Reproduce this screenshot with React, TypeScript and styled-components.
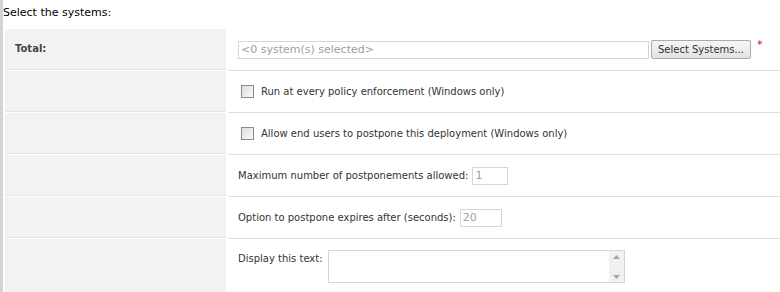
import React from "react";
import styled, { createGlobalStyle } from "styled-components";

const GlobalStyle = createGlobalStyle`
  html, body {
    margin: 0;
    padding: 0;
    background: #fff;
  }
  body {
    font-family: "DejaVu Sans", Verdana, sans-serif;
    font-size: 10px;
    color: #333;
  }
`;

const Page = styled.div`
  border-left: 3px solid #d4d4d4;
  min-height: 292px;
  box-sizing: border-box;
`;

const Title = styled.div`
  font-size: 11px;
  line-height: 16px;
  color: #000;
  padding: 5px 0 8px 0;
`;

const Table = styled.div`
  display: flex;
  flex-direction: column;
  padding-left: 2px;
`;

const Row = styled.div<{ $tall?: boolean }>`
  display: grid;
  grid-template-columns: 221px 1fr;
  column-gap: 2px;
  height: ${(p) => (p.$tall ? "60px" : "42px")};
`;

const LabelCell = styled.div`
  background: #f2f2f2;
  border-bottom: 1px solid #e3e3e3;
  margin-bottom: 1px;
  padding: 14px 10px 0;
  font-weight: bold;
  color: #444;
`;

const ValueCell = styled.div<{ $top?: boolean }>`
  border-bottom: 1px solid #dedede;
  display: flex;
  align-items: ${(p) => (p.$top ? "flex-start" : "center")};
  padding: ${(p) => (p.$top ? "11px 10px 0" : "0 10px")};
  gap: 4px;
  white-space: nowrap;
`;

const TextInput = styled.div<{ $w: number }>`
  width: ${(p) => p.$w}px;
  height: 18px;
  box-sizing: border-box;
  border: 1px solid #d6d6d6;
  color: #a0a0a0;
  font-size: 11px;
  line-height: 16px;
  padding-left: 2px;
  background: #fff;
`;

const Button = styled.button`
  width: 100px;
  height: 19px;
  padding: 0;
  font-family: inherit;
  font-size: 10px;
  color: #333;
  border: 1px solid #aaa;
  border-radius: 2px;
  background: linear-gradient(#f6f6f6, #e2e2e2);
  margin-left: -2px;
`;

const Required = styled.span`
  color: #c0143c;
  font-size: 11px;
  position: relative;
  top: -5px;
  margin-left: 2px;
`;

const CheckLabel = styled.label`
  display: flex;
  align-items: center;
  gap: 7px;
  padding-left: 3px;
`;

const Box = styled.span`
  width: 11px;
  height: 11px;
  border: 1px solid #8a8a8a;
  background: linear-gradient(135deg, #dcdcdc, #fafafa);
`;

const FieldText = styled.span`
  margin-top: 3px;
`;

const TextArea = styled.div`
  width: 297px;
  height: 33px;
  box-sizing: border-box;
  border: 1px solid #d6d6d6;
  display: flex;
  justify-content: flex-end;
  margin-left: 1px;
`;

const Scroll = styled.div`
  width: 15px;
  background: #f0f0f0;
  display: flex;
  flex-direction: column;
  justify-content: space-between;
  align-items: center;
  padding: 4px 0 3px;
  box-sizing: border-box;
`;

const Arrow = styled.svg`
  display: block;
`;

export default function App() {
  return (
    <>
      <GlobalStyle />
      <Page>
        <Title>Select the systems:</Title>
        <Table>
          <Row>
            <LabelCell>Total:</LabelCell>
            <ValueCell>
              <TextInput $w={411}>&lt;0 system(s) selected&gt;</TextInput>
              <Button>Select Systems...</Button>
              <Required>*</Required>
            </ValueCell>
          </Row>
          <Row>
            <LabelCell />
            <ValueCell>
              <CheckLabel>
                <Box />
                Run at every policy enforcement (Windows only)
              </CheckLabel>
            </ValueCell>
          </Row>
          <Row>
            <LabelCell />
            <ValueCell>
              <CheckLabel>
                <Box />
                Allow end users to postpone this deployment (Windows only)
              </CheckLabel>
            </ValueCell>
          </Row>
          <Row>
            <LabelCell />
            <ValueCell>
              Maximum number of postponements allowed:
              <TextInput $w={36}>1</TextInput>
            </ValueCell>
          </Row>
          <Row>
            <LabelCell />
            <ValueCell>
              Option to postpone expires after (seconds):
              <TextInput $w={42}>20</TextInput>
            </ValueCell>
          </Row>
          <Row $tall>
            <LabelCell />
            <ValueCell $top>
              <FieldText>Display this text:</FieldText>
              <TextArea>
                <Scroll>
                  <Arrow width="7" height="4" viewBox="0 0 7 4">
                    <path d="M0 4 L3.5 0 L7 4 Z" fill="#a8a8a8" />
                  </Arrow>
                  <Arrow width="7" height="4" viewBox="0 0 7 4">
                    <path d="M0 0 L3.5 4 L7 0 Z" fill="#a8a8a8" />
                  </Arrow>
                </Scroll>
              </TextArea>
            </ValueCell>
          </Row>
        </Table>
      </Page>
    </>
  );
}
